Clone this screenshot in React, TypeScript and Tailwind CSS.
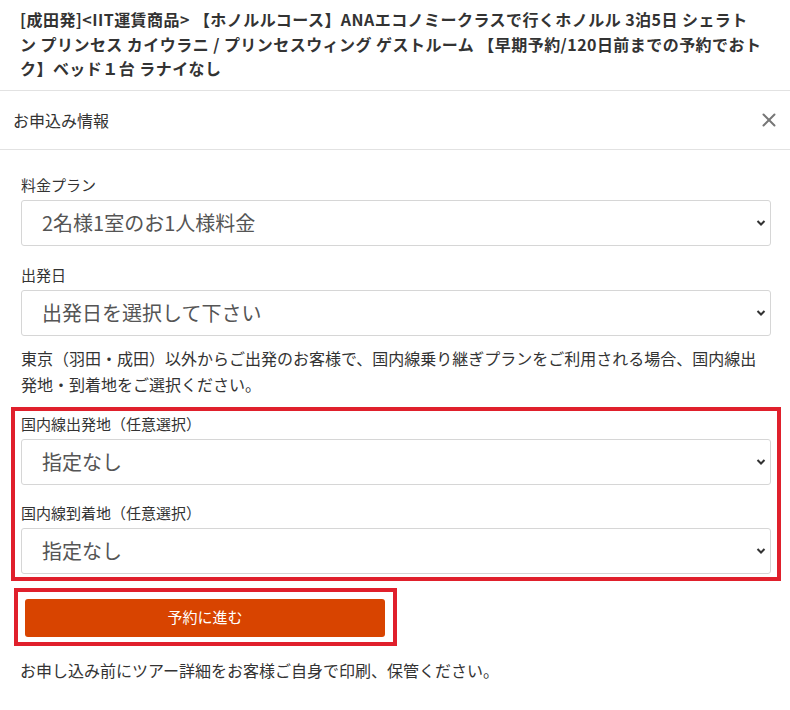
import { X } from 'lucide-react';

const font = { fontFamily: '"Noto Sans CJK JP", "Noto Sans", sans-serif' };

function Chevron() {
  return (
    <svg width="10" height="7" viewBox="0 0 10 7" className="pointer-events-none absolute right-[5px] top-1/2 -translate-y-1/2">
      <path d="M1.5 1.5 L5 5 L8.5 1.5" fill="none" stroke="#333" strokeWidth="2" />
    </svg>
  );
}

function SelectBox({ value }: { value: string }) {
  return (
    <div className="relative mt-[5px]">
      <select
        className="h-[46px] w-full appearance-none rounded-[3px] border border-[#d6d6d6] bg-white pl-[20px] text-[20px] text-[#555]"
        defaultValue={value}
      >
        <option>{value}</option>
      </select>
      <Chevron />
    </div>
  );
}

function Field({ label, value }: { label: string; value: string }) {
  return (
    <div>
      <div className="text-[15px] leading-[20px] text-[#333]">{label}</div>
      <SelectBox value={value} />
    </div>
  );
}

export default function App() {
  return (
    <div className="w-[790px] bg-white text-[#333]" style={font}>
      <div className="pl-[20px] pr-[28px] pt-[7px] pb-[9px] text-[16px] font-bold leading-[24.5px] tracking-[0.45px] text-[#333]">
        [成田発]&lt;IIT運賃商品&gt; 【ホノルルコース】ANAエコノミークラスで行くホノルル 3泊5日 シェラトン プリンセス カイウラニ / プリンセスウィング ゲストルーム 【早期予約/120日前までの予約でおトク】ベッド１台 ラナイなし
      </div>
      <div className="flex h-[60px] items-center justify-between border-y border-[#e2e2e2] pl-[13px] pr-[10px]">
        <span className="text-[16px] text-[#333]">お申込み情報</span>
        <X size={22} strokeWidth={2.2} className="text-[#777]" />
      </div>
      <div className="pl-[21px] pr-[19px] pt-[25px] pb-[30px]">
        <Field label="料金プラン" value="2名様1室のお1人様料金" />
        <div className="mt-[19px]">
          <Field label="出発日" value="出発日を選択して下さい" />
        </div>
        <p className="mt-[9px] text-[16px] leading-[26px] text-[#333]">
          東京（羽田・成田）以外からご出発のお客様で、国内線乗り継ぎプランをご利用される場合、国内線出発地・到着地をご選択ください。
        </p>
        <div className="-mx-[10px] mt-[10px] border-4 border-[#e0202c] px-[6px] pt-[3px] pb-[3px]">
          <Field label="国内線出発地（任意選択）" value="指定なし" />
          <div className="mt-[18px]">
            <Field label="国内線到着地（任意選択）" value="指定なし" />
          </div>
        </div>
        <div className="-ml-[7px] mt-[7px] w-[383px] border-4 border-[#e0202c] pt-[7px] pr-[8px] pb-[5px] pl-[7px]">
          <button className="h-[38px] w-full rounded-[3px] bg-[#d84400] text-[15px] text-white">
            予約に進む
          </button>
        </div>
        <p className="-ml-[1px] mt-[13px] text-[16px] leading-[22px] text-[#333]">
          お申し込み前にツアー詳細をお客様ご自身で印刷、保管ください。
        </p>
      </div>
    </div>
  );
}
